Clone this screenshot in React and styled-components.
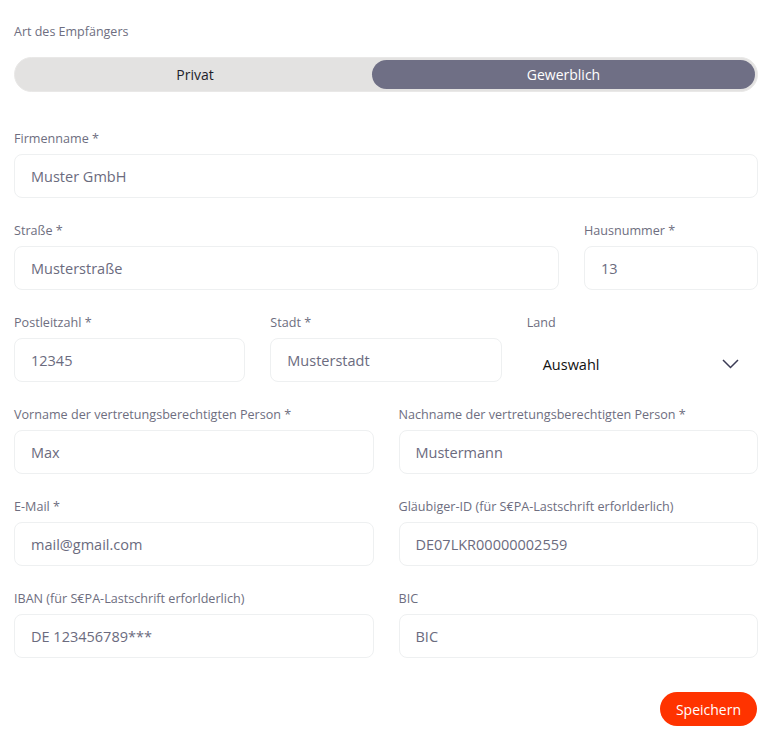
import React, { useState } from "react";
import styled, { createGlobalStyle } from "styled-components";

const GlobalStyle = createGlobalStyle`
  body {
    margin: 0;
    background: #fff;
    font-family: "Open Sans", "Noto Sans", sans-serif;
  }
  * { box-sizing: border-box; }
`;

const Page = styled.div`
  padding: 23px 16px 16px 14px;
  display: flex;
  flex-direction: column;
`;

const SectionLabel = styled.div`
  font-size: 12.5px;
  color: #6e6e80;
  margin-bottom: 17px;
`;

const Toggle = styled.div`
  display: grid;
  grid-template-columns: 1fr 383px;
  height: 35px;
  padding: 2px 2px 2px 3px;
  border-radius: 18px;
  background: #e3e2e1;
  border: 1px solid #e9e8e7;
`;

const ToggleOption = styled.button`
  border: none;
  outline: none;
  border-radius: 15px;
  font-family: inherit;
  font-size: 14px;
  cursor: pointer;
  background: ${(p) => (p.$active ? "#6f6f85" : "transparent")};
  color: ${(p) => (p.$active ? "#fff" : "#1d1d2b")};
`;

const Form = styled.div`
  margin-top: 38px;
  display: flex;
  flex-direction: column;
  gap: 24px;
`;

const Row = styled.div`
  display: grid;
  grid-template-columns: ${(p) => p.$cols};
  column-gap: 25px;
`;

const Field = styled.label`
  display: flex;
  flex-direction: column;
  gap: 7px;
`;

const Label = styled.span`
  font-size: 12.6px;
  line-height: 17px;
  color: #6e6e80;
  white-space: nowrap;
`;

const Input = styled.input`
  height: 44px;
  border: 1px solid #eef0f1;
  border-radius: 8px;
  padding: 0 16px;
  font-family: inherit;
  font-size: 14.5px;
  color: #6b6b7e;
  outline: none;
  background: #fff;
`;

const Select = styled.div`
  height: 44px;
  padding: 8px 19px 0 16px;
  display: flex;
  align-items: center;
  justify-content: space-between;
  font-size: 14.5px;
  color: #111;
`;

const Footer = styled.div`
  display: flex;
  justify-content: flex-end;
  margin-top: 34px;
`;

const SaveButton = styled.button`
  border: none;
  background: #ff3300;
  color: #fff;
  font-family: inherit;
  font-size: 14px;
  font-weight: 500;
  height: 34px;
  width: 97px;
  margin-right: 1px;
  border-radius: 17px;
  cursor: pointer;
`;

function TextField({ label, value }) {
  return (
    <Field>
      <Label>{label}</Label>
      <Input readOnly value={value} />
    </Field>
  );
}

export default function App() {
  const [type, setType] = useState("business");
  return (
    <Page>
      <GlobalStyle />
      <SectionLabel>Art des Empfängers</SectionLabel>
      <Toggle>
        <ToggleOption $active={type === "private"} onClick={() => setType("private")}>
          Privat
        </ToggleOption>
        <ToggleOption $active={type === "business"} onClick={() => setType("business")}>
          Gewerblich
        </ToggleOption>
      </Toggle>
      <Form>
        <Row $cols="1fr">
          <TextField label="Firmenname *" value="Muster GmbH" />
        </Row>
        <Row $cols="1fr 174px">
          <TextField label="Straße *" value="Musterstraße" />
          <TextField label="Hausnummer *" value="13" />
        </Row>
        <Row $cols="1fr 1fr 1fr">
          <TextField label="Postleitzahl *" value="12345" />
          <TextField label="Stadt *" value="Musterstadt" />
          <Field>
            <Label>Land</Label>
            <Select>
              Auswahl
              <svg width="17" height="10" viewBox="0 0 17 10" fill="none">
                <path d="M1 1l7.5 7.5L16 1" stroke="#3b3b55" strokeWidth="1.5" />
              </svg>
            </Select>
          </Field>
        </Row>
        <Row $cols="1fr 1fr">
          <TextField label="Vorname der vertretungsberechtigten Person *" value="Max" />
          <TextField label="Nachname der vertretungsberechtigten Person *" value="Mustermann" />
        </Row>
        <Row $cols="1fr 1fr">
          <TextField label="E-Mail *" value="mail@gmail.com" />
          <TextField label="Gläubiger-ID (für S€PA-Lastschrift erforlderlich)" value="DE07LKR00000002559" />
        </Row>
        <Row $cols="1fr 1fr">
          <TextField label="IBAN (für S€PA-Lastschrift erforlderlich)" value="DE 123456789***" />
          <TextField label="BIC" value="BIC" />
        </Row>
      </Form>
      <Footer>
        <SaveButton>Speichern</SaveButton>
      </Footer>
    </Page>
  );
}
